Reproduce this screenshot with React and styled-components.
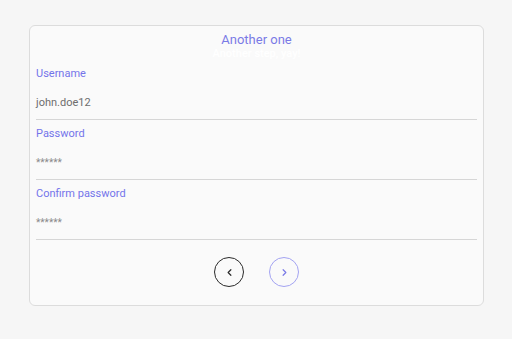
import React from "react";
import styled, { createGlobalStyle } from "styled-components";
import { ChevronLeft, ChevronRight } from "lucide-react";

const GlobalStyle = createGlobalStyle`
  html, body {
    margin: 0;
    padding: 0;
    background: #f6f6f6;
    font-family: Roboto, "Liberation Sans", sans-serif;
  }
`;

const Page = styled.div`
  padding: 25px 28px 0 29px;
`;

const Card = styled.div`
  background: #fafafa;
  border: 1px solid #dcdcdc;
  border-radius: 6px;
  padding: 6px 6px 18px 6px;
`;

const Header = styled.div`
  text-align: center;
  height: 28px;
`;

const Title = styled.div`
  color: #7a7ae6;
  font-size: 13px;
  line-height: 15px;
`;

const Subtitle = styled.div`
  color: #ffffff;
  font-size: 11px;
  font-weight: 500;
  line-height: 13px;
`;

const Field = styled.div`
  height: 60px;
  padding-top: 7px;
  box-sizing: border-box;
  border-bottom: 1px solid #d6d6d6;
`;

const Label = styled.div`
  color: #7474ea;
  font-size: 11px;
  line-height: 14px;
`;

const Value = styled.div`
  margin-top: 15px;
  color: ${(p) => (p.$masked ? "#8a8a8a" : "#6e6e6e")};
  font-size: ${(p) => (p.$masked ? "10px" : "11px")};
  line-height: 14px;
`;

const Nav = styled.div`
  display: flex;
  justify-content: center;
  gap: 25px;
  margin-top: 17px;
`;

const Circle = styled.button`
  width: 30px;
  height: 30px;
  border-radius: 50%;
  border: ${(p) => (p.$primary ? "1.5px solid #a3a3f2" : "1px solid #2a2a2a")};
  color: ${(p) => (p.$primary ? "#7a7ae6" : "#2a2a2a")};
  background: transparent;
  display: flex;
  align-items: center;
  justify-content: center;
  padding: 0;
  cursor: pointer;
`;

const fields = [
  { label: "Username", value: "john.doe12" },
  { label: "Password", value: "******", masked: true },
  { label: "Confirm password", value: "******", masked: true },
];

export default function App() {
  return (
    <>
      <GlobalStyle />
      <Page>
        <Card>
          <Header>
            <Title>Another one</Title>
            <Subtitle>Another step, yay!</Subtitle>
          </Header>
          {fields.map((f) => (
            <Field key={f.label}>
              <Label>{f.label}</Label>
              <Value $masked={f.masked}>{f.value}</Value>
            </Field>
          ))}
          <Nav>
            <Circle>
              <ChevronLeft size={11} strokeWidth={2.6} />
            </Circle>
            <Circle $primary>
              <ChevronRight size={11} strokeWidth={2.6} />
            </Circle>
          </Nav>
        </Card>
      </Page>
    </>
  );
}
